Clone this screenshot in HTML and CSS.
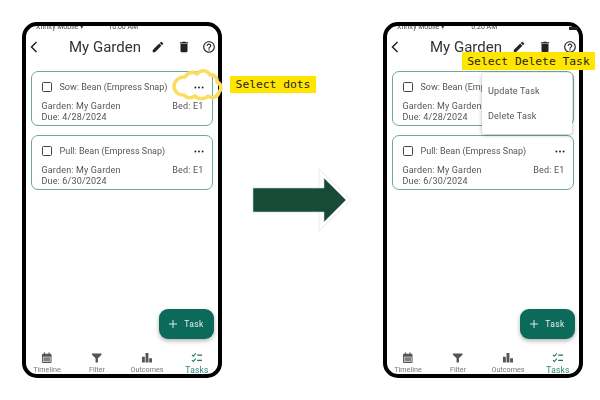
FILE: index.html
```html
<!DOCTYPE html>
<html lang="en">
<head>
<meta charset="utf-8">
<title>Delete a task</title>
<link rel="stylesheet" href="styles.css">
</head>
<body>
<svg class="defs" width="0" height="0" aria-hidden="true">
  <symbol id="i-back" viewBox="0 0 12 16"><path d="M8.500 3 3.500 8l5 5" fill="none" stroke="currentColor" stroke-width="1.500"/></symbol>
  <symbol id="i-edit" viewBox="0 0 24 24"><path fill="currentColor" d="M3 17.250V21h3.750L17.810 9.940l-3.750-3.750L3 17.250zM20.710 7.040a1 1 0 0 0 0-1.410l-2.340-2.340a1 1 0 0 0-1.410 0l-1.830 1.830 3.750 3.750 1.830-1.830z"/></symbol>
  <symbol id="i-trash" viewBox="0 0 24 24"><path fill="currentColor" d="M6 19c0 1.100.9 2 2 2h8c1.100 0 2-.9 2-2V7H6v12zM19 4h-3.500l-1-1h-5l-1 1H5v2h14V4z"/></symbol>
  <symbol id="i-help" viewBox="0 0 24 24"><path fill="currentColor" d="M11 18h2v-2h-2v2zm1-16C6.480 2 2 6.480 2 12s4.480 10 10 10 10-4.480 10-10S17.520 2 12 2zm0 18c-4.410 0-8-3.590-8-8s3.590-8 8-8 8 3.590 8 8-3.590 8-8 8zm0-14c-2.210 0-4 1.790-4 4h2c0-1.100.9-2 2-2s2 .9 2 2c0 2-3 1.750-3 5h2c0-2.250 3-2.500 3-5 0-2.210-1.790-4-4-4z"/></symbol>
  <symbol id="i-dots" viewBox="0 0 10 3"><circle cx="1.400" cy="1.500" r=".95" fill="currentColor"/><circle cx="5" cy="1.500" r=".95" fill="currentColor"/><circle cx="8.600" cy="1.500" r=".95" fill="currentColor"/></symbol>
  <symbol id="i-plus" viewBox="0 0 10 10"><path d="M5 0v10M0 5h10" stroke="currentColor" stroke-width="1.200"/></symbol>
  <symbol id="i-cal" viewBox="0 0 24 24"><path fill="currentColor" fill-rule="evenodd" d="M6 1h2.500v2.500h7V1H18v2.500h1.500A2.500 2.500 0 0 1 22 6v15a2 2 0 0 1-2 2H4a2 2 0 0 1-2-2V6a2.500 2.500 0 0 1 2.500-2.500H6zM4 10v11h16V10z"/><path fill="currentColor" opacity=".75" d="M5 11h14v9H5z"/></symbol>
  <symbol id="i-filter" viewBox="0 0 24 24"><path fill="currentColor" d="M2 3h20v2.500L14.500 13v9h-5v-9L2 5.500z"/></symbol>
  <symbol id="i-bars" viewBox="0 0 24 24"><path fill="currentColor" d="M2 10h6v12H2zM9.500 2h6v20h-6zM17 13h6v9h-6z"/></symbol>
  <symbol id="i-tasks" viewBox="0 0 24 24"><path d="M2 6l3 3 5-6M2 17l3 3 5-6" fill="none" stroke="currentColor" stroke-width="2.200"/><path d="M13 6.500h10M13 17.500h10" stroke="currentColor" stroke-width="2.600"/></symbol>
</svg>

<main class="canvas">
  <section class="phone phone-left">
    <div class="status"><span>Xfinity Mobile</span><span class="wifi">&#9662;</span><span class="clock">10:00 AM</span></div>
    <header class="appbar">
      <svg class="ic-back"><use href="#i-back"/></svg>
      <h1 class="title">My Garden</h1>
      <svg class="ic-bar"><use href="#i-edit"/></svg>
      <svg class="ic-bar"><use href="#i-trash"/></svg>
      <svg class="ic-bar"><use href="#i-help"/></svg>
    </header>
    <div class="list">
      <article class="card">
        <div class="row-top"><span class="check"></span><span class="name">Sow: Bean (Empress Snap)</span><svg class="dots"><use href="#i-dots"/></svg></div>
        <div class="row-meta"><span>Garden: My Garden</span><span>Bed: E1</span></div>
        <div class="row-meta"><span>Due: 4/28/2024</span></div>
      </article>
      <article class="card">
        <div class="row-top"><span class="check"></span><span class="name">Pull: Bean (Empress Snap)</span><svg class="dots"><use href="#i-dots"/></svg></div>
        <div class="row-meta"><span>Garden: My Garden</span><span>Bed: E1</span></div>
        <div class="row-meta"><span>Due: 6/30/2024</span></div>
      </article>
    </div>
    <button class="fab"><svg class="ic-plus"><use href="#i-plus"/></svg>Task</button>
    <nav class="tabs">
      <div class="tab"><svg><use href="#i-cal"/></svg><span>Timeline</span></div>
      <div class="tab"><svg><use href="#i-filter"/></svg><span>Filter</span></div>
      <div class="tab"><svg><use href="#i-bars"/></svg><span>Outcomes</span></div>
      <div class="tab tab-on"><svg><use href="#i-tasks"/></svg><span>Tasks</span></div>
    </nav>
  </section>

  <section class="phone phone-right">
    <div class="status"><span>Xfinity Mobile</span><span class="wifi">&#9662;</span><span class="clock clock-b">6:20 AM</span><span class="batt"></span></div>
    <header class="appbar">
      <svg class="ic-back"><use href="#i-back"/></svg>
      <h1 class="title">My Garden</h1>
      <svg class="ic-bar"><use href="#i-edit"/></svg>
      <svg class="ic-bar"><use href="#i-trash"/></svg>
      <svg class="ic-bar"><use href="#i-help"/></svg>
    </header>
    <div class="list">
      <article class="card">
        <div class="row-top"><span class="check"></span><span class="name">Sow: Bean (Empress Snap)</span><svg class="dots"><use href="#i-dots"/></svg></div>
        <div class="row-meta"><span>Garden: My Garden</span><span>Bed: E1</span></div>
        <div class="row-meta"><span>Due: 4/28/2024</span></div>
      </article>
      <article class="card">
        <div class="row-top"><span class="check"></span><span class="name">Pull: Bean (Empress Snap)</span><svg class="dots"><use href="#i-dots"/></svg></div>
        <div class="row-meta"><span>Garden: My Garden</span><span>Bed: E1</span></div>
        <div class="row-meta"><span>Due: 6/30/2024</span></div>
      </article>
    </div>
    <div class="menu"><div class="menu-item">Update Task</div><div class="menu-item">Delete Task</div></div>
    <button class="fab"><svg class="ic-plus"><use href="#i-plus"/></svg>Task</button>
    <nav class="tabs">
      <div class="tab"><svg><use href="#i-cal"/></svg><span>Timeline</span></div>
      <div class="tab"><svg><use href="#i-filter"/></svg><span>Filter</span></div>
      <div class="tab"><svg><use href="#i-bars"/></svg><span>Outcomes</span></div>
      <div class="tab tab-on"><svg><use href="#i-tasks"/></svg><span>Tasks</span></div>
    </nav>
  </section>

  <svg class="cloud" viewBox="0 0 70 50"><path d="M14 26A10 10 0 0 1 25 17 8 8 0 0 1 37 14 7.500 7.500 0 0 1 50 15 6 6 0 0 1 57 22 6 6 0 0 1 59 32 7 7 0 0 1 48 36 9 9 0 0 1 35 36 8 8 0 0 1 24 35 9 9 0 0 1 14 26Z" fill="none" stroke="#fbdd62" stroke-width="3.600" stroke-linejoin="round"/></svg>
  <div class="note note-dots">Select dots</div>
  <div class="note note-delete">Select Delete Task</div>
  <svg class="arrow" viewBox="0 0 100 64"><path d="M67 1 99 32 67 63Z" fill="#fff" stroke="#e8ecea"/><path d="M1 20H72V10L94 32 72 54V44H1Z" fill="#184a38" stroke="#c9d6d0" stroke-width=".6"/></svg>
</main>
</body>
</html>
```

FILE: styles.css
```css
* { box-sizing: border-box; }

html, body { margin: 0; padding: 0; background: #fff; }

.defs { position: absolute; }

.canvas {
  position: relative;
  width: 600px;
  height: 400px;
  overflow: hidden;
  background: #fff;
  font-family: Roboto, "Liberation Sans", sans-serif;
  color: #444;
}

.phone {
  position: absolute;
  top: 22px;
  width: 200px;
  height: 356px;
  border: 4px solid #000;
  border-radius: 15px;
  background: #fff;
  display: flex;
  flex-direction: column;
  filter: blur(.25px);
}

.phone-left { left: 22px; }
.phone-right { left: 383px; }

.status {
  height: 6px;
  padding-left: 10px;
  display: flex;
  align-items: flex-end;
  overflow: hidden;
  font-size: 7px;
  line-height: 9px;
  color: #444;
  white-space: nowrap;
}

.wifi { margin-left: 2px; width: 6px; font-size: 7px; }
.clock { margin-left: 22px; }
.clock-b { margin-left: 24px; }
.batt { margin-left: 72px; width: 9px; height: 3px; background: #222; align-self: flex-start; margin-top: 1px; }

.appbar {
  height: 30px;
  display: flex;
  align-items: center;
  padding-left: 1.500px;
  color: #222;
}

.ic-back { width: 12px; height: 16px; color: #222; }

.title {
  margin: 0 0 0 29.500px;
  width: 72px;
  font-size: 15px;
  font-weight: 400;
  white-space: nowrap;
  color: #333;
}

.ic-bar { width: 14px; height: 14px; margin-left: 11.500px; }
.ic-bar:nth-of-type(2) { margin-left: 10px; }

.list {
  padding: 9px 5px 0 4.500px;
  display: flex;
  flex-direction: column;
  gap: 9px;
}

.card {
  height: 55px;
  border: 1px solid #6fa89e;
  border-radius: 7px;
  padding: 0 8.500px 0 10px;
  font-size: 9px;
  color: #555;
}

.row-top {
  height: 28px;
  padding-top: 2px;
  display: flex;
  align-items: center;
}

.check {
  width: 10px;
  height: 10px;
  border: 1.500px solid #444;
  border-radius: 1.500px;
  flex: none;
}

.name { margin-left: 8px; flex: 1; white-space: nowrap; }

.dots { width: 10px; height: 3px; color: #222; flex: none; }

.row-meta {
  height: 11.500px;
  display: flex;
  justify-content: space-between;
  align-items: center;
  letter-spacing: .16px;
}

.menu {
  position: absolute;
  left: 95px;
  top: 47px;
  width: 90px;
  height: 61px;
  padding-top: 5px;
  background: #fff;
  border-radius: 3px;
  box-shadow: 0 1px 4px rgba(0, 0, 0, .3);
  font-size: 9px;
  color: #555;
}

.menu-item {
  height: 25.500px;
  padding-left: 6px;
  display: flex;
  align-items: center;
  letter-spacing: .2px;
}

.fab {
  position: absolute;
  left: 133px;
  top: 283px;
  width: 55px;
  height: 30px;
  border: 0;
  border-radius: 9px;
  background: #0b6a5a;
  color: #e6f0ee;
  display: flex;
  align-items: center;
  justify-content: center;
  gap: 7px;
  font-family: inherit;
  font-size: 8.500px;
  letter-spacing: .4px;
  box-shadow: 0 2px 4px rgba(0, 0, 0, .3);
}

.ic-plus { width: 8px; height: 8px; }

.tabs {
  margin: auto -4px 0;
  height: 25px;
  display: flex;
  position: relative;
}

.tab {
  width: 50px;
  padding-top: 3px;
  display: flex;
  flex-direction: column;
  align-items: center;
  font-size: 7.200px;
  line-height: 10px;
  color: #777;
}

.tab svg { width: 11.500px; height: 11.500px; color: #555; margin-bottom: 1.500px; flex: none; }

.tab-on { color: #2e8576; font-size: 8.500px; letter-spacing: .2px; }
.tab-on svg { color: #1d6f60; }

.cloud {
  position: absolute;
  left: 160px;
  top: 60px;
  width: 70px;
  height: 50px;
}

.note {
  position: absolute;
  background: #ffe600;
  color: #222;
  font-family: "DejaVu Sans Mono", monospace;
  font-size: 11.300px;
  display: flex;
  align-items: center;
  justify-content: center;
  white-space: nowrap;
}

.note-dots { left: 230px; top: 76px; width: 86px; height: 17px; }
.note-delete { left: 462px; top: 52px; width: 133px; height: 18px; }

.arrow {
  position: absolute;
  left: 252px;
  top: 168px;
  width: 100px;
  height: 64px;
}
```
